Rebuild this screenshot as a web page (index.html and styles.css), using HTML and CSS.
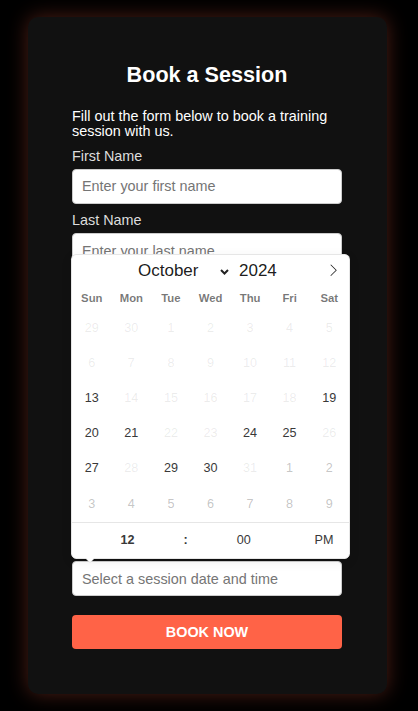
FILE: index.html
```html
<!DOCTYPE html>
<html lang="en">
<head>
<meta charset="utf-8">
<title>Book a Session</title>
<link rel="stylesheet" href="styles.css">
</head>
<body>
<div class="card">
  <h2 class="title">Book a Session</h2>
  <p class="intro">Fill out the form below to book a training session with us.</p>
  <form class="form">
    <div class="group">
      <label class="label">First Name</label>
      <input class="field" type="text" placeholder="Enter your first name">
    </div>
    <div class="group">
      <label class="label">Last Name</label>
      <input class="field" type="text" placeholder="Enter your last name">
    </div>
    <div class="group">
      <label class="label">Email</label>
      <input class="field" type="email">
    </div>
    <div class="group">
      <label class="label">Phone</label>
      <input class="field" type="tel">
    </div>
    <div class="group">
      <label class="label">Notes</label>
      <textarea class="field field-notes"></textarea>
    </div>
    <div class="group">
      <div class="date-wrap">
        <input class="field" type="text" aria-label="Session date and time" placeholder="Select a session date and time">
        <div class="calendar">
          <div class="cal-months">
            <div class="cal-current">
              <span class="cal-month">October
                <svg class="chev" width="9" height="6" viewBox="0 0 9 6"><path d="M1 1 L4.5 4.5 L8 1" fill="none" stroke="#222" stroke-width="2"/></svg>
              </span>
              <span class="cal-year">2024</span>
            </div>
            <svg class="cal-next" viewBox="0 0 17 17" width="12.6" height="12.6"><path d="M13.207 8.472l-7.854 7.854-0.707-0.707 7.146-7.146-7.146-7.147 0.707-0.707 7.854 7.853z"/></svg>
          </div>
          <div class="cal-weekdays">
            <span>Sun</span><span>Mon</span><span>Tue</span><span>Wed</span><span>Thu</span><span>Fri</span><span>Sat</span>
          </div>
          <div class="cal-days">
            <span class="day off">29</span><span class="day off">30</span><span class="day off">1</span><span class="day off">2</span><span class="day off">3</span><span class="day off">4</span><span class="day off">5</span>
            <span class="day off">6</span><span class="day off">7</span><span class="day off">8</span><span class="day off">9</span><span class="day off">10</span><span class="day off">11</span><span class="day off">12</span>
            <span class="day">13</span><span class="day off">14</span><span class="day off">15</span><span class="day off">16</span><span class="day off">17</span><span class="day off">18</span><span class="day">19</span>
            <span class="day">20</span><span class="day">21</span><span class="day off">22</span><span class="day off">23</span><span class="day">24</span><span class="day">25</span><span class="day off">26</span>
            <span class="day">27</span><span class="day off">28</span><span class="day">29</span><span class="day">30</span><span class="day off">31</span><span class="day next">1</span><span class="day next">2</span>
            <span class="day next">3</span><span class="day next">4</span><span class="day next">5</span><span class="day next">6</span><span class="day next">7</span><span class="day next">8</span><span class="day next">9</span>
          </div>
          <div class="cal-time">
            <span class="t-hour">12</span><span class="t-sep">:</span><span class="t-min">00</span><span class="t-ampm">PM</span>
          </div>
        </div>
      </div>
    </div>
    <button class="btn" type="button">BOOK NOW</button>
  </form>
</div>
</body>
</html>
```

FILE: styles.css
```css
* { box-sizing: border-box; }

body {
  margin: 0;
  background: #000;
  font-family: "Liberation Sans", Arial, sans-serif;
  padding: 17px 0 17px 28px;
}

.card {
  width: 359px;
  background: #111;
  border-radius: 10px;
  padding: 45px 45px 45px 44px;
  box-shadow: 0 0 20px rgba(255, 99, 71, 0.3);
}

.title {
  margin: 0 0 20.5px;
  font-size: 21.6px;
  font-weight: 700;
  color: #fff;
  text-align: center;
  line-height: normal;
}

.intro {
  margin: 0 0 8.2px;
  font-size: 14.4px;
  line-height: 15.5px;
  color: #fff;
}

.form { margin: 0; }

.group {
  display: flex;
  flex-direction: column;
  margin-bottom: 8.5px;
}

.label {
  font-size: 14.4px;
  line-height: normal;
  color: #ddd;
  margin-bottom: 5px;
}

.field {
  display: block;
  width: 100%;
  height: 35px;
  border: 1px solid #ccc;
  border-radius: 4px;
  padding: 0 9px;
  background: #fff;
  font-family: "Liberation Sans", Arial, sans-serif;
  font-size: 14.4px;
  color: #333;
  line-height: 33px;
}

.field::placeholder { color: #757575; }

.field-notes { height: 126px; resize: none; }

.date-wrap { position: relative; }

.btn {
  display: block;
  margin-top: 18.5px;
  width: 100%;
  height: 34px;
  background: #ff6347;
  color: #fff;
  border: none;
  border-radius: 4px;
  font-family: "Liberation Sans", Arial, sans-serif;
  font-size: 14.4px;
  font-weight: 700;
}

/* calendar popup */
.calendar {
  position: absolute;
  left: 0;
  bottom: calc(100% + 3.6px);
  width: 277px;
  background: #fff;
  border-radius: 4.5px;
  box-shadow: 1px 0 0 #e6e6e6, -1px 0 0 #e6e6e6, 0 1px 0 #e6e6e6, 0 -1px 0 #e6e6e6, 0 3px 13px rgba(0, 0, 0, 0.08);
  font-size: 12.6px;
  color: #393939;
  z-index: 5;
}

.calendar::before,
.calendar::after {
  content: "";
  position: absolute;
  top: 100%;
  border: solid transparent;
}
.calendar::before { left: 13px; border-width: 5px; border-top-color: #e6e6e6; }
.calendar::after { left: 14px; border-width: 4px; border-top-color: #fff; }

.cal-months {
  position: relative;
  height: 30.6px;
}

.cal-current {
  position: absolute;
  left: 12.5%;
  width: 75%;
  top: 0;
  height: 100%;
  padding-left: 3px;
  display: flex;
  justify-content: center;
  align-items: center;
  font-size: 17px;
  color: rgba(0, 0, 0, 0.9);
}

.cal-month {
  width: 101.3px;
  display: flex;
  align-items: center;
  justify-content: space-between;
  padding: 0 5px 0 5px;
}

.chev { margin-top: 2px; }

.cal-year {
  width: 56.7px;
  padding-left: 4.7px;
}

.cal-next {
  position: absolute;
  right: 9px;
  top: 9px;
  fill: rgba(0, 0, 0, 0.9);
}

.cal-weekdays {
  display: flex;
  align-items: center;
  height: 25.2px;
}

.cal-weekdays span {
  flex: 1;
  text-align: center;
  font-size: 11.34px;
  font-weight: 700;
  color: rgba(0, 0, 0, 0.54);
}

.cal-days {
  display: grid;
  grid-template-columns: repeat(7, 35.1px);
  grid-auto-rows: 35.1px;
  justify-content: space-around;
}

.day {
  text-align: center;
  line-height: 35.1px;
  color: #393939;
}
.day.off { color: rgba(57, 57, 57, 0.1); }
.day.next { color: rgba(57, 57, 57, 0.3); }

.cal-time {
  display: flex;
  height: 36px;
  border-top: 1px solid #e6e6e6;
  line-height: 35px;
  text-align: center;
  color: #393939;
}
.t-hour { width: 40%; font-weight: 700; }
.t-sep { width: 2%; font-weight: 700; }
.t-min { width: 40%; }
.t-ampm { width: 18%; }
```
